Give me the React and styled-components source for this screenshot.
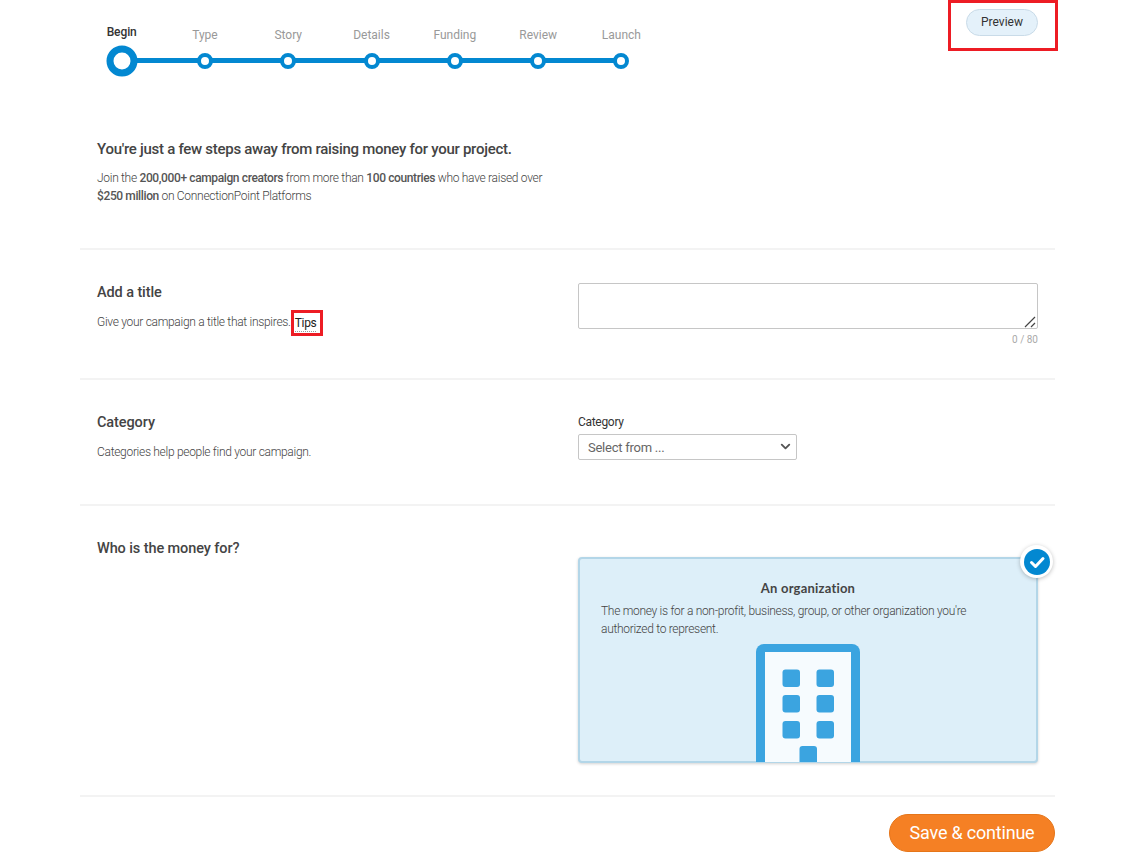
import React from 'react';
import styled, { createGlobalStyle } from 'styled-components';
import { ChevronDown } from 'lucide-react';

const STEPS = ['Begin', 'Type', 'Story', 'Details', 'Funding', 'Review', 'Launch'];

const Global = createGlobalStyle`
    html, body {
        margin: 0;
        background: #fff;
        font-family: Roboto, "Liberation Sans", sans-serif;
        color: #555;
    }
    * { box-sizing: border-box; }
`;

const Page = styled.div`
    width: 975px;
    margin-left: 80px;
`;

const Header = styled.div`
    display: flex;
    justify-content: space-between;
    align-items: flex-start;
    height: 130px;
`;

const Stepper = styled.div`
    display: flex;
    padding-top: 24px;
`;

const Step = styled.div`
    position: relative;
    width: 83.3px;
    height: 56px;
    display: flex;
    flex-direction: column;
    align-items: center;

    &:not(:last-child)::after {
        content: "";
        position: absolute;
        left: 50%;
        top: 34px;
        width: 100%;
        height: 5px;
        background: #0388d1;
    }
`;

const StepLabel = styled.span`
    height: ${p => (p.$active ? '16px' : '20px')};
    padding-top: ${p => (p.$active ? '0' : '3px')};
    font-size: 12px;
    line-height: 16px;
    letter-spacing: ${p => (p.$active ? '-0.1px' : '0')};
    color: ${p => (p.$active ? '#333' : '#999')};
    font-weight: ${p => (p.$active ? 500 : 400)};
`;

const Dot = styled.span`
    position: absolute;
    z-index: 1;
    left: 50%;
    top: 36.5px;
    transform: translate(-50%, -50%);
    width: ${p => (p.$active ? '31px' : '16px')};
    height: ${p => (p.$active ? '31px' : '16px')};
    border: ${p => (p.$active ? '7px' : '4px')} solid #0388d1;
    border-radius: 50%;
    background: #fff;
`;

const RedBox = styled.div`
    border: 3px solid #ed1c24;
`;

const PreviewBox = styled(RedBox)`
    width: 110px;
    height: 51px;
    margin-right: -3px;
    padding: 6px 0 0 15px;
`;

const PreviewButton = styled.button`
    width: 72px;
    height: 27px;
    padding: 0 0 1px;
    border: 1px solid #c9dbe8;
    border-radius: 14px;
    background: #e4f1fa;
    color: #333;
    font-family: inherit;
    font-size: 12px;
`;

const Intro = styled.div`
    height: 120px;
    padding: 9px 17px 0;
    border-bottom: 2px solid #f3f3f3;
`;

const IntroTitle = styled.h1`
    margin: 0 0 11px;
    font-size: 15px;
    line-height: 20px;
    font-weight: 500;
    letter-spacing: -0.28px;
    color: #444;
`;

const Text = styled.p`
    margin: 0;
    font-size: 12px;
    line-height: 17.6px;
    font-weight: 300;
    letter-spacing: -0.3px;
    color: #444;

    b {
        font-weight: 500;
        letter-spacing: -0.38px;
        color: #555;
    }
`;

const Section = styled.section`
    display: grid;
    grid-template-columns: 481px 460px;
    height: ${p => p.$height}px;
    padding: ${p => p.$top}px 17px 0;
    border-bottom: 2px solid #f3f3f3;
`;

const Title = styled.h2`
    margin: 0 0 11px;
    font-size: 14.5px;
    line-height: 20px;
    font-weight: 500;
    letter-spacing: -0.1px;
    color: #444;
`;

const TipsBox = styled(RedBox)`
    display: inline-block;
    height: 26px;
    margin: -6px 0 -7px 0;
    padding: 2px 4px 0 1px;
    vertical-align: middle;
`;

const Tips = styled.span`
    display: block;
    color: #222;
    font-weight: 400;
    line-height: 16px;
    border-bottom: 1px dotted #999;
`;

const InputWrap = styled.div`
    position: relative;

    svg {
        position: absolute;
        right: 2px;
        top: 33px;
        pointer-events: none;
    }
`;

const TitleInput = styled.textarea`
    display: block;
    width: 460px;
    height: 46px;
    border: 1px solid #c6c6c6;
    border-radius: 2px;
    outline: none;
    resize: none;
`;

const Counter = styled.div`
    margin-top: 4px;
    text-align: right;
    font-size: 10px;
    line-height: 13px;
    color: #aaa;
`;

const FieldLabel = styled.label`
    display: block;
    margin: 1px 0 4px;
    font-size: 12px;
    line-height: 16px;
    letter-spacing: -0.3px;
    color: #333;
`;

const SelectWrap = styled.div`
    position: relative;
    width: 219px;
    color: #555;

    svg {
        position: absolute;
        right: 4px;
        top: 5px;
        pointer-events: none;
    }
`;

const Select = styled.select`
    display: block;
    width: 100%;
    height: 26px;
    padding: 0 0 0 9px;
    appearance: none;
    border: 1px solid #c6c6c6;
    border-radius: 2px;
    background: #fff;
    color: #666;
    font-family: inherit;
    font-size: 13px;
    letter-spacing: -0.25px;
`;

const Card = styled.div`
    position: relative;
    width: 460px;
    height: 206px;
    margin-top: 18px;
    padding: 21px 21px 0;
    border: 2px solid #b3d6e8;
    border-radius: 4px;
    background: #ddeff9;
    box-shadow: 0 1px 3px rgba(0, 0, 0, 0.18);
    display: flex;
    flex-direction: column;
`;

const CardTitle = styled.h3`
    margin: 0 0 7px;
    text-align: center;
    font-family: Lato, Inter, sans-serif;
    font-size: 13px;
    line-height: 16px;
    font-weight: 700;
    letter-spacing: 0.2px;
    color: #444;
`;

const CheckBadge = styled.span`
    position: absolute;
    top: -14px;
    right: -17px;
    width: 33px;
    height: 33px;
    display: flex;
    align-items: center;
    justify-content: center;
    border-radius: 50%;
    background: #fff;
    box-shadow: 0 1px 4px rgba(0, 0, 0, 0.25);
`;

const BuildingIcon = styled.svg`
    display: block;
    width: 104px;
    height: 118px;
    position: absolute;
    left: 176px;
    bottom: -1px;
`;

const Footer = styled.div`
    display: flex;
    justify-content: flex-end;
    padding-top: 17px;
`;

const SaveButton = styled.button`
    width: 166px;
    height: 38px;
    padding: 0 0 1px;
    border: 1px solid #e57519;
    border-radius: 19px;
    background: #f58024;
    color: #fff;
    font-family: inherit;
    font-size: 18px;
    font-weight: 400;
    letter-spacing: -0.2px;
`;

const Building = () => (
    <BuildingIcon viewBox="0 0 104 118">
        <path d="M0 118V8a8 8 0 0 1 8-8h88a8 8 0 0 1 8 8v110z" fill="#3ba4e0" />
        <rect x="9" y="8" width="86" height="110" fill="#f6fbfe" />
        {[25.5, 51, 77].map(y => [26.5, 60.5].map(x => (
            <rect key={`${x}-${y}`} x={x} y={y} width="17.5" height="17.5" rx="3" fill="#3ba4e0" />
        )))}
        <path d="M43.500 118v-13a3 3 0 0 1 3-3h11.500a3 3 0 0 1 3 3v13z" fill="#3ba4e0" />
    </BuildingIcon>
);

const Check = () => (
    <svg width="26" height="26" viewBox="0 0 26 26">
        <circle cx="13" cy="13" r="13" fill="#0388d1" />
        <path d="M7.500 13.500l4 4 7.500-8" fill="none" stroke="#fff" strokeWidth="3" strokeLinecap="round" strokeLinejoin="round" />
    </svg>
);

const ResizeGrip = () => (
    <svg width="12" height="12" viewBox="0 0 12 12">
        <path d="M1 11L11 1M7 11l4-4" stroke="#444" strokeWidth="1.200" fill="none" />
    </svg>
);

const App = () => {
    return <Page>
        <Global />
        <Header>
            <Stepper>
                {STEPS.map((step, i) => <Step key={step}>
                    <StepLabel $active={i === 0}>{step}</StepLabel>
                    <Dot $active={i === 0} />
                </Step>)}
            </Stepper>
            <PreviewBox>
                <PreviewButton>Preview</PreviewButton>
            </PreviewBox>
        </Header>
        <Intro>
            <IntroTitle>You're just a few steps away from raising money for your project.</IntroTitle>
            <Text>
                Join the <b>200,000+ campaign creators</b> from more than <b>100 countries</b> who have raised over<br />
                <b>$250 million</b> on ConnectionPoint Platforms
            </Text>
        </Intro>
        <Section $height={130} $top={33}>
            <div>
                <Title>Add a title</Title>
                <Text>
                    Give your campaign a title that inspires.
                    <TipsBox><Tips>Tips</Tips></TipsBox>
                </Text>
            </div>
            <div>
                <InputWrap>
                    <TitleInput />
                    <ResizeGrip />
                </InputWrap>
                <Counter>0 / 80</Counter>
            </div>
        </Section>
        <Section $height={126} $top={33}>
            <div>
                <Title>Category</Title>
                <Text>Categories help people find your campaign.</Text>
            </div>
            <div>
                <FieldLabel>Category</FieldLabel>
                <SelectWrap>
                    <Select defaultValue="">
                        <option value="">Select from ...</option>
                    </Select>
                    <ChevronDown size={15} strokeWidth={3} />
                </SelectWrap>
            </div>
        </Section>
        <Section $height={291} $top={33}>
            <div>
                <Title>Who is the money for?</Title>
            </div>
            <Card>
                <CheckBadge><Check /></CheckBadge>
                <CardTitle>An organization</CardTitle>
                <Text>The money is for a non-profit, business, group, or other organization you're authorized to represent.</Text>
                <Building />
            </Card>
        </Section>
        <Footer>
            <SaveButton>Save &amp; continue</SaveButton>
        </Footer>
    </Page>
}

export default App
